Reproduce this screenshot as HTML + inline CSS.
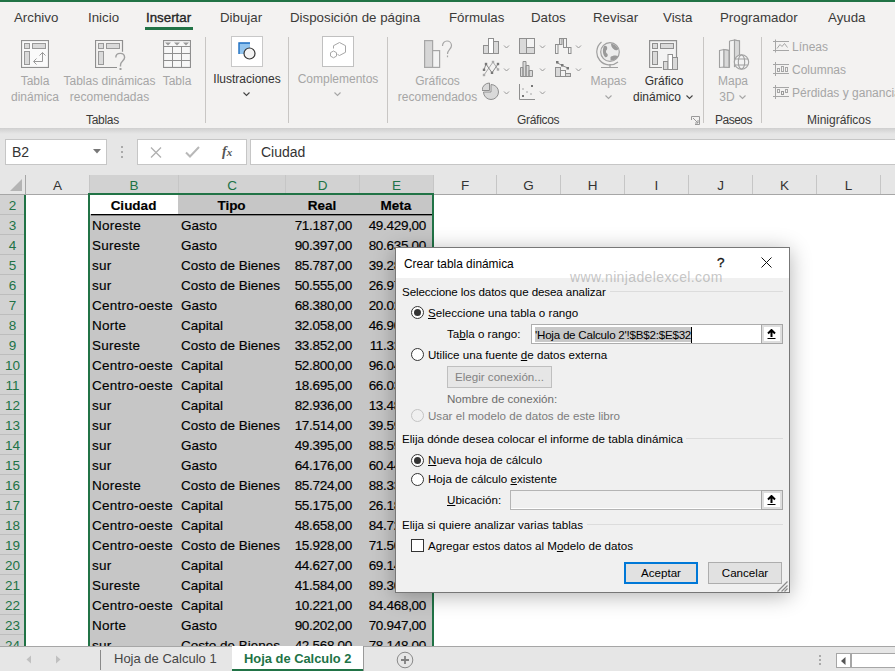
<!DOCTYPE html>
<html><head><meta charset="utf-8">
<style>
*{box-sizing:border-box;margin:0;padding:0}
html,body{width:895px;height:671px;overflow:hidden;background:#fff;font-family:"Liberation Sans",sans-serif;position:relative}
.a{position:absolute;white-space:nowrap}
.tab{position:absolute;top:10px;font-size:13.3px;color:#3b3a39;line-height:16px;white-space:nowrap}
.rl{position:absolute;font-size:12px;line-height:15px;white-space:nowrap;color:#a6a6a6;text-align:center}
.dk{color:#323130}
.gl{position:absolute;top:113px;font-size:12px;line-height:15px;color:#3b3a39;white-space:nowrap}
.sep{position:absolute;top:37px;width:1px;height:86px;background:#c8c6c4}
.ch{position:absolute;top:175px;height:19px;background:#e6e6e6;font-size:13.5px;line-height:22px;text-align:center;color:#333;border-right:1px solid #c6c6c6}
.ch.sel{background:#d2d2d2;color:#217346}
.rh{position:absolute;left:0;width:24px;padding-left:1px;height:20px;background:#d2d2d2;font-size:13.5px;line-height:22px;text-align:center;color:#217346;border-bottom:1px solid #bdbdbd}
.c{position:absolute;height:20px;line-height:21px;font-size:13.5px;color:#000;white-space:nowrap;-webkit-text-stroke:0.15px #000}
.c.b{font-weight:bold}
.c.r{text-align:right}
.dlg{position:absolute;left:395px;top:247px;width:395px;height:346px;background:#f0f0f0;border:1px solid #777;box-shadow:0 3px 20px rgba(0,0,0,.3)}
.dt{position:absolute;font-size:11.6px;line-height:14px;color:#000;white-space:nowrap}
.dis{color:#6d6d6d}
.radio{position:absolute;width:13px;height:13px;border-radius:50%;border:1px solid #333;background:#fff}
.radio.on::after{content:"";position:absolute;left:2px;top:2px;width:7px;height:7px;border-radius:50%;background:#333}
.u{text-decoration:underline}
</style></head><body>
<!-- top green -->
<div class="a" style="left:0;top:0;width:895px;height:2px;background:#217346"></div>
<div class="a" style="left:0;top:2px;width:895px;height:126px;background:#f3f2f1"></div>
<!-- tabs -->
<div class="tab" style="left:14px">Archivo</div>
<div class="tab" style="left:88px">Inicio</div>
<div class="tab" style="left:146px;color:#262626;-webkit-text-stroke:0.35px #262626">Insertar</div>
<div class="a" style="left:145px;top:27px;width:48px;height:3px;background:#217346"></div>
<div class="tab" style="left:220px">Dibujar</div>
<div class="tab" style="left:290px">Disposición de página</div>
<div class="tab" style="left:449px">Fórmulas</div>
<div class="tab" style="left:531px">Datos</div>
<div class="tab" style="left:593px">Revisar</div>
<div class="tab" style="left:663px">Vista</div>
<div class="tab" style="left:720px">Programador</div>
<div class="tab" style="left:828px">Ayuda</div>

<!-- ribbon separators -->
<div class="sep" style="left:205px"></div>
<div class="sep" style="left:288px"></div>
<div class="sep" style="left:387px"></div>
<div class="sep" style="left:703px"></div>
<div class="sep" style="left:761px"></div>

<!-- Tablas -->
<svg class="a" style="left:21px;top:40px" width="28" height="28" viewBox="0 0 28 28" fill="none" stroke="#999" stroke-width="1">
<rect x="0.5" y="0.5" width="27" height="27" fill="#fafafa" stroke="#8f8f8f" stroke-width="1.2"/>
<rect x="3.5" y="3.5" width="5" height="5" fill="#dadada"/><rect x="11.5" y="3.5" width="13" height="5" fill="#dadada"/><rect x="3.5" y="11.5" width="5" height="13" fill="#dadada"/>
<path d="M21.5 12.5V21.5H13M18.5 15.5L21.5 12.5L24.5 15.5M15.5 18.5L12.5 21.5L15.5 24.5"/>
</svg>
<div class="rl" style="left:0px;top:74px;width:70px">Tabla</div>
<div class="rl" style="left:0px;top:90px;width:70px">dinámica</div>

<svg class="a" style="left:95px;top:40px" width="32" height="32" viewBox="0 0 32 32" fill="none" stroke="#999" stroke-width="1">
<path d="M27.5 11.8V0.5H0.5V27.5H22" stroke="#8f8f8f" stroke-width="1.2"/>
<rect x="3.5" y="3.5" width="5" height="5" fill="#dadada"/><rect x="11.5" y="3.5" width="13" height="5" fill="#dadada"/><rect x="3.5" y="11.5" width="5" height="13" fill="#dadada"/>
<path d="M20.8 17.5C20.8 14.5 22.8 13.4 25.2 13.4C27.8 13.4 29.6 15.2 29.6 17.5C29.6 20.6 25.5 21.5 25.5 25V26.6" stroke="#a0a0a0" stroke-width="1.4"/>
<rect x="24.5" y="28" width="2" height="2" fill="#a0a0a0" stroke="none"/>
</svg>
<div class="rl" style="left:62px;top:74px;width:95px">Tablas dinámicas</div>
<div class="rl" style="left:62px;top:90px;width:95px">recomendadas</div>

<svg class="a" style="left:163px;top:40px" width="28" height="28" viewBox="0 0 28 28" fill="none" stroke="#8f8f8f" stroke-width="1">
<rect x="0.5" y="0.5" width="27" height="27" fill="#f7f7f7" stroke-width="1.2"/>
<path d="M0.5 6.5H27.5M0.5 13.5H27.5M0.5 20.5H27.5M9.5 6.5V27.5M18.5 6.5V27.5"/>
<path d="M2 2.5H8L5 5.5ZM11 2.5H17L14 5.5ZM20 2.5H26L23 5.5Z" fill="#9a9a9a" stroke="none"/>
</svg>
<div class="rl" style="left:157px;top:74px;width:40px">Tabla</div>

<!-- Ilustraciones -->
<div class="a" style="left:231px;top:36px;width:32px;height:31px;background:#fff;border:1px solid #c8c8c8"></div>
<svg class="a" style="left:238px;top:42px" width="20" height="20" viewBox="0 0 20 20">
<rect x="1" y="1" width="11" height="11" fill="#92c4ee"/>
<path d="M1 12V1H12" fill="none" stroke="#1c6ec1" stroke-width="1.4"/>
<circle cx="11.5" cy="11.5" r="5.5" fill="#f3f3f3" stroke="#333" stroke-width="1.2"/>
</svg>
<div class="rl dk" style="left:207px;top:72px;width:80px">Ilustraciones</div>
<svg class="a" style="left:243px;top:92px" width="7" height="5" viewBox="0 0 7 5"><path d="M0.5 0.5L3.5 3.5L6.5 0.5" fill="none" stroke="#444" stroke-width="1.1"/></svg>

<!-- Complementos -->
<div class="a" style="left:322px;top:36px;width:32px;height:31px;background:#fff;border:1px solid #c0c0c0"></div>
<svg class="a" style="left:328px;top:42px" width="20" height="20" viewBox="0 0 20 20" fill="none" stroke="#a6a6a6" stroke-width="1">
<path d="M5.5 6.5V3.7L11.5 0.5L17.5 3.7V10.3L11.5 13.5L9.5 12.4"/>
<path d="M5.5 9L8.5 10.7V14.1L5.5 15.8L2.5 14.1V10.7Z"/>
</svg>
<div class="rl" style="left:292px;top:72px;width:92px">Complementos</div>
<svg class="a" style="left:334px;top:92px" width="7" height="5" viewBox="0 0 7 5"><path d="M0.5 0.5L3.5 3.5L6.5 0.5" fill="none" stroke="#a6a6a6" stroke-width="1.1"/></svg>

<!-- Gráficos recomendados -->
<svg class="a" style="left:424px;top:40px" width="30" height="28" viewBox="0 0 30 28" fill="none" stroke="#a6a6a6" stroke-width="1.2">
<rect x="0.6" y="0.6" width="8" height="26.8" fill="#d6d6d6"/>
<rect x="8.6" y="10.6" width="7" height="16.8" fill="#f3f3f3"/>
<path d="M18.5 6C18.5 3 20.5 1 23 1C25.5 1 27.5 3 27.5 5.5C27.5 9 23.5 10 23.5 14M23.5 15.5V17.2"/>
</svg>
<div class="rl" style="left:400px;top:74px;width:75px">Gráficos</div>
<div class="rl" style="left:395px;top:90px;width:85px">recomendados</div>

<!-- small charts -->
<svg class="a" style="left:482px;top:37px" width="100" height="64" viewBox="0 0 100 64" fill="none" stroke="#8f8f8f" stroke-width="1">
<!-- col chart -->
<rect x="1.5" y="8.5" width="5" height="8" fill="#d9d9d9"/><rect x="6.5" y="1.5" width="5" height="15" fill="#fff"/><rect x="11.5" y="4.5" width="5" height="12" fill="#d9d9d9"/>
<!-- treemap -->
<rect x="37.5" y="1.5" width="15" height="15" fill="#f3f3f3"/><rect x="37.5" y="1.5" width="7" height="15" fill="#d9d9d9"/><rect x="44.5" y="10.5" width="8" height="6" fill="#d9d9d9"/>
<!-- waterfall -->
<rect x="73.5" y="7.5" width="2.5" height="9" fill="#f3f3f3"/><rect x="77.5" y="1.5" width="2.5" height="6" fill="#d9d9d9"/><rect x="81.5" y="1.5" width="3" height="9" fill="#f3f3f3"/><rect x="86.5" y="10.5" width="2.5" height="6" fill="#f3f3f3"/>
<path d="M76 7.5H77.5M80 1.5H81.5M84.5 10.5H86.5"/>
<!-- line chart -->
<g transform="translate(0,23)">
<path d="M2 15L11 2L16 9.5" stroke="#aaa" stroke-width="1"/>
<path d="M2 9.8L4 4L10 12.8L16 4" stroke="#888" stroke-width="1"/>
<rect x="0.8" y="8.6" width="2.4" height="2.4" fill="#777" stroke="none"/><rect x="2.8" y="2.8" width="2.4" height="2.4" fill="#777" stroke="none"/><rect x="8.8" y="11.6" width="2.4" height="2.4" fill="#777" stroke="none"/><rect x="14.8" y="2.8" width="2.4" height="2.4" fill="#777" stroke="none"/>
<rect x="0.8" y="13.8" width="2.4" height="2.4" fill="#aaa" stroke="none"/><rect x="9.8" y="0.8" width="2.4" height="2.4" fill="#aaa" stroke="none"/><rect x="14.8" y="8.3" width="2.4" height="2.4" fill="#aaa" stroke="none"/>
</g>
<!-- histogram -->
<path d="M38.5 39.5V30.5H41V39.5M41 39.5V24.5H44V39.5M44 39.5V28.5H47V39.5M47 39.5V33.5H50.5V39.5H38.5" fill="#d9d9d9"/>
<!-- pareto -->
<rect x="73.5" y="30.5" width="5" height="9" fill="#d9d9d9"/><rect x="78.5" y="33.5" width="5" height="6" fill="#f3f3f3"/><rect x="83.5" y="36.5" width="5" height="3" fill="#d9d9d9"/>
<path d="M75 25.5L80 28.5L86 31"/><rect x="74" y="24" width="2.5" height="2.5" fill="#777" stroke="none"/><rect x="79" y="27" width="2.5" height="2.5" fill="#777" stroke="none"/><rect x="84.5" y="30" width="2.5" height="2.5" fill="#777" stroke="none"/>
<!-- pie -->
<path d="M9 47.5A7.5 7.5 0 1 1 1.5 55H9Z" fill="#d9d9d9"/><path d="M7.5 46V53.5H0A7.5 7.5 0 0 1 7.5 46Z" fill="#d9d9d9"/>
<!-- scatter -->
<path d="M37.5 47V62.5H53"/>
<rect x="40" y="58" width="2" height="2" fill="#777" stroke="none"/><rect x="40" y="51" width="2" height="2" fill="#ccc" stroke="none"/><rect x="44" y="54" width="2" height="2" fill="#ccc" stroke="none"/><rect x="48" y="56" width="2" height="2" fill="#ccc" stroke="none"/><rect x="49" y="48" width="2" height="2" fill="#777" stroke="none"/>
<!-- chevrons -->
<path d="M22 8.5L24.5 11L27 8.5M58 8.5L60.5 11L63 8.5M94 8.5L96.5 11L99 8.5M22 31.5L24.5 34L27 31.5M58 31.5L60.5 34L63 31.5M94 31.5L96.5 34L99 31.5M22 54.5L24.5 57L27 54.5M58 54.5L60.5 57L63 54.5" stroke="#999"/>
</svg>

<!-- Mapas -->
<svg class="a" style="left:596px;top:38px" width="26" height="32" viewBox="0 0 26 32" fill="none" stroke="#a0a0a0" stroke-width="1.2">
<circle cx="14" cy="14" r="9.3" fill="#ececec"/>
<path d="M8 8C10 7 12 9 11 11.5C9.5 12.5 9.5 15 11.5 16C12.5 18 10.5 20 9 19C7 17 6 12 8 8ZM15 5.5C18 6 21 8 22.5 11C21 13 19 12.5 17.5 11C16 10 15 8 15 5.5ZM14.5 19C17 17 20.5 17 22 18.5C20.5 21 17 23 14.5 22.5Z" fill="#9a9a9a" stroke="none"/>
<path d="M5.5 4A12 12 0 0 0 22 24M14 26V29.5M5 29.5H22"/>
</svg>
<div class="rl" style="left:586px;top:74px;width:45px">Mapas</div>
<svg class="a" style="left:605px;top:95px" width="7" height="5" viewBox="0 0 7 5"><path d="M0.5 0.5L3.5 3.5L6.5 0.5" fill="none" stroke="#a6a6a6" stroke-width="1.1"/></svg>

<!-- Gráfico dinámico -->
<svg class="a" style="left:649px;top:40px" width="31" height="31" viewBox="0 0 31 31" fill="none" stroke="#8f8f8f" stroke-width="1.2">
<path d="M13 27.5H0.6V0.6H27.5V17" fill="#f3f3f3"/>
<rect x="3.5" y="3.5" width="5" height="5" fill="#dadada" stroke-width="1"/><rect x="11.5" y="3.5" width="13" height="5" fill="#dadada" stroke-width="1"/><rect x="3.5" y="11.5" width="5" height="13" fill="#dadada" stroke-width="1"/>
<rect x="14.5" y="21.5" width="4.5" height="8" fill="#d9d9d9" stroke-width="1"/><rect x="19" y="14.5" width="4.5" height="15" fill="#fff" stroke-width="1"/><rect x="23.5" y="17.5" width="5" height="12" fill="#d9d9d9" stroke-width="1"/>
</svg>
<div class="rl dk" style="left:630px;top:74px;width:68px">Gráfico</div>
<div class="rl dk" style="left:623px;top:90px;width:68px">dinámico</div>
<svg class="a" style="left:686px;top:95px" width="7" height="5" viewBox="0 0 7 5"><path d="M0.5 0.5L3.5 3.5L6.5 0.5" fill="none" stroke="#444" stroke-width="1.1"/></svg>
<svg class="a" style="left:691px;top:116px" width="9" height="9" viewBox="0 0 9 9" fill="none" stroke="#999" stroke-width="1"><path d="M0.5 4V0.5H8.5V8.5H4M2 2L7 7M7 4V7H4"/></svg>

<!-- Mapa 3D -->
<svg class="a" style="left:718px;top:39px" width="33" height="32" viewBox="0 0 33 32" fill="none" stroke="#a0a0a0" stroke-width="1.1">
<path d="M1.5 11.5L6 10.5L11 11.5V28.5L6 28L1.5 28.5Z" fill="#f3f3f3"/><path d="M6 10.5V28" /><path d="M6 10.5L11 11.5V28.5L6 28Z" fill="#d9d9d9"/>
<path d="M11.5 2L16.5 1L21.5 2V20M11.5 2V28.5" fill="#f3f3f3"/><path d="M16.5 1V28" /><path d="M16.5 1L21.5 2V18L16.5 28Z" fill="#d9d9d9"/>
<circle cx="23.5" cy="23" r="7.2" fill="#f3f3f3"/>
<path d="M17 20H30M17 26H30"/><ellipse cx="23.5" cy="23" rx="3.2" ry="7"/>
</svg>
<div class="rl" style="left:713px;top:74px;width:40px">Mapa</div>
<div class="rl" style="left:713px;top:90px;width:28px">3D</div>
<svg class="a" style="left:739px;top:95px" width="7" height="5" viewBox="0 0 7 5"><path d="M0.5 0.5L3.5 3.5L6.5 0.5" fill="none" stroke="#a6a6a6" stroke-width="1.1"/></svg>

<!-- Minigráficos -->
<svg class="a" style="left:772px;top:39px" width="18" height="62" viewBox="0 0 18 62" fill="none" stroke="#a6a6a6" stroke-width="1">
<path d="M3.5 0.5V13.5M1 2.5H17M1 11.5H17M5 9.5L8 5.5L10 7.5L12.5 4.5L15.5 8.5"/>
<path d="M3.5 23V37M1 25.5H17M1 34.5H17"/><rect x="5.5" y="29.5" width="2" height="3"/><rect x="9.5" y="27.5" width="2" height="5"/><rect x="13.5" y="28.5" width="2" height="4"/>
<path d="M3.5 46V60M1 48.5H17M1 57.5H17"/><rect x="5.5" y="50.5" width="2" height="3"/><rect x="9.5" y="52.5" width="2" height="3" stroke="#999"/><rect x="13.5" y="50.5" width="2" height="3"/>
</svg>
<div class="a" style="left:792px;top:40px;font-size:12px;line-height:15px;color:#a6a6a6">Líneas</div>
<div class="a" style="left:792px;top:63px;font-size:12px;line-height:15px;color:#a6a6a6">Columnas</div>
<div class="a" style="left:792px;top:86px;font-size:12px;line-height:15px;color:#a6a6a6">Pérdidas y ganancias</div>


<!-- group labels -->
<div class="gl" style="left:86px;letter-spacing:-0.3px">Tablas</div>
<div class="gl" style="left:517px;letter-spacing:-0.3px">Gráficos</div>
<div class="gl" style="left:715px;letter-spacing:-0.5px">Paseos</div>
<div class="gl" style="left:807px">Minigráficos</div>

<!-- ribbon shadow -->
<div class="a" style="left:0;top:128px;width:895px;height:47px;background:#e6e6e6"></div>
<div class="a" style="left:0;top:128px;width:895px;height:6px;background:linear-gradient(#cfcfcf,#e6e6e6)"></div>

<!-- formula bar -->
<div class="a" style="left:5px;top:139px;width:102px;height:26px;background:#fff;border:1px solid #c6c6c6"></div>
<div class="a" style="left:12px;top:144px;font-size:14px;line-height:17px;color:#333">B2</div>
<svg class="a" style="left:93px;top:149px" width="8" height="5" viewBox="0 0 8 5"><path d="M0 0H8L4 4.5Z" fill="#777"/></svg>
<div class="a" style="left:121px;top:146px;width:2px;height:2px;background:#aaa"></div><div class="a" style="left:121px;top:151px;width:2px;height:2px;background:#aaa"></div><div class="a" style="left:121px;top:156px;width:2px;height:2px;background:#aaa"></div>
<!--FBAR-->
<div class="a" style="left:137px;top:139px;width:110px;height:26px;background:#fff;border:1px solid #c6c6c6"></div>
<div class="a" style="left:250px;top:139px;width:650px;height:26px;background:#fff;border:1px solid #c6c6c6"></div>
<div class="a" style="left:261px;top:144px;font-size:14px;line-height:17px;color:#333">Ciudad</div>
<svg class="a" style="left:150px;top:147px" width="12" height="11" viewBox="0 0 12 11"><path d="M1 0.5L11 10.5M11 0.5L1 10.5" stroke="#b0b0b0" stroke-width="1.3"/></svg>
<svg class="a" style="left:185px;top:146px" width="15" height="12" viewBox="0 0 15 12"><path d="M1 6.5L5 10.5L14 1" fill="none" stroke="#b8b8b8" stroke-width="2"/></svg>
<div class="a" style="left:222px;top:143px;font-family:'Liberation Serif',serif;font-style:italic;font-size:14px;line-height:17px;color:#555;font-weight:bold">f<span style="font-size:11px">x</span></div>

<!-- grid -->
<div class="a" style="left:0;top:175px;width:26px;height:20px;background:#e6e6e6;border-right:1px solid #a6a6a6"></div>
<svg class="a" style="left:10px;top:179px" width="13" height="12" viewBox="0 0 13 12"><path d="M12 0V12H0Z" fill="#b4b4b4"/></svg>
<div class="a" style="left:0;top:194px;width:895px;height:1px;background:#a6a6a6"></div>
<div class="ch" style="left:26px;width:64px">A</div>
<div class="ch sel" style="left:90px;width:89px">B</div>
<div class="ch sel" style="left:179px;width:107px">C</div>
<div class="ch sel" style="left:286px;width:74px">D</div>
<div class="ch sel" style="left:360px;width:74px">E</div>
<div class="ch" style="left:434px;width:63px">F</div>
<div class="ch" style="left:497px;width:64px">G</div>
<div class="ch" style="left:561px;width:64px">H</div>
<div class="ch" style="left:625px;width:64px">I</div>
<div class="ch" style="left:689px;width:64px">J</div>
<div class="ch" style="left:753px;width:64px">K</div>
<div class="ch" style="left:817px;width:64px">L</div>
<div class="ch" style="left:881px;width:64px">M</div>
<div class="rh" style="top:195px">2</div>
<div class="rh" style="top:215px">3</div>
<div class="rh" style="top:235px">4</div>
<div class="rh" style="top:255px">5</div>
<div class="rh" style="top:275px">6</div>
<div class="rh" style="top:295px">7</div>
<div class="rh" style="top:315px">8</div>
<div class="rh" style="top:335px">9</div>
<div class="rh" style="top:355px">10</div>
<div class="rh" style="top:375px">11</div>
<div class="rh" style="top:395px">12</div>
<div class="rh" style="top:415px">13</div>
<div class="rh" style="top:435px">14</div>
<div class="rh" style="top:455px">15</div>
<div class="rh" style="top:475px">16</div>
<div class="rh" style="top:495px">17</div>
<div class="rh" style="top:515px">18</div>
<div class="rh" style="top:535px">19</div>
<div class="rh" style="top:555px">20</div>
<div class="rh" style="top:575px">21</div>
<div class="rh" style="top:595px">22</div>
<div class="rh" style="top:615px">23</div>
<div class="rh" style="top:635px">24</div>
<div style="position:absolute;left:90px;top:195px;width:342px;height:460px;background:#c6c6c6"></div>
<div style="position:absolute;left:90px;top:195px;width:88px;height:19px;background:#fff"></div>
<div style="position:absolute;left:91px;top:214px;width:341px;height:1px;background:#000"></div><div style="position:absolute;left:91px;top:215px;width:341px;height:1px;background:rgba(0,0,0,.35)"></div>
<div class="c b" style="top:195px;left:89px;width:89px;text-align:center">Ciudad</div>
<div class="c b" style="top:195px;left:178px;width:107px;text-align:center">Tipo</div>
<div class="c b" style="top:195px;left:285px;width:74px;text-align:center">Real</div>
<div class="c b" style="top:195px;left:359px;width:74px;text-align:center">Meta</div>
<div class="c" style="top:215px;left:92px;letter-spacing:0.25px">Noreste</div>
<div class="c" style="top:215px;left:181px">Gasto</div>
<div class="c r" style="top:215px;left:285px;width:67px;letter-spacing:-0.3px">71.187,00</div>
<div class="c r" style="top:215px;left:359px;width:67px;letter-spacing:-0.3px">49.429,00</div>
<div class="c" style="top:235px;left:92px;letter-spacing:0.25px">Sureste</div>
<div class="c" style="top:235px;left:181px">Gasto</div>
<div class="c r" style="top:235px;left:285px;width:67px;letter-spacing:-0.3px">90.397,00</div>
<div class="c r" style="top:235px;left:359px;width:67px;letter-spacing:-0.3px">80.635,00</div>
<div class="c" style="top:255px;left:92px;letter-spacing:0.25px">sur</div>
<div class="c" style="top:255px;left:181px">Costo de Bienes</div>
<div class="c r" style="top:255px;left:285px;width:67px;letter-spacing:-0.3px">85.787,00</div>
<div class="c r" style="top:255px;left:359px;width:67px;letter-spacing:-0.3px">39.281,00</div>
<div class="c" style="top:275px;left:92px;letter-spacing:0.25px">sur</div>
<div class="c" style="top:275px;left:181px">Costo de Bienes</div>
<div class="c r" style="top:275px;left:285px;width:67px;letter-spacing:-0.3px">50.555,00</div>
<div class="c r" style="top:275px;left:359px;width:67px;letter-spacing:-0.3px">26.971,00</div>
<div class="c" style="top:295px;left:92px;letter-spacing:0.25px">Centro-oeste</div>
<div class="c" style="top:295px;left:181px">Gasto</div>
<div class="c r" style="top:295px;left:285px;width:67px;letter-spacing:-0.3px">68.380,00</div>
<div class="c r" style="top:295px;left:359px;width:67px;letter-spacing:-0.3px">20.021,00</div>
<div class="c" style="top:315px;left:92px;letter-spacing:0.25px">Norte</div>
<div class="c" style="top:315px;left:181px">Capital</div>
<div class="c r" style="top:315px;left:285px;width:67px;letter-spacing:-0.3px">32.058,00</div>
<div class="c r" style="top:315px;left:359px;width:67px;letter-spacing:-0.3px">46.901,00</div>
<div class="c" style="top:335px;left:92px;letter-spacing:0.25px">Sureste</div>
<div class="c" style="top:335px;left:181px">Costo de Bienes</div>
<div class="c r" style="top:335px;left:285px;width:67px;letter-spacing:-0.3px">33.852,00</div>
<div class="c r" style="top:335px;left:359px;width:67px;letter-spacing:-0.3px">11.321,00</div>
<div class="c" style="top:355px;left:92px;letter-spacing:0.25px">Centro-oeste</div>
<div class="c" style="top:355px;left:181px">Capital</div>
<div class="c r" style="top:355px;left:285px;width:67px;letter-spacing:-0.3px">52.800,00</div>
<div class="c r" style="top:355px;left:359px;width:67px;letter-spacing:-0.3px">96.041,00</div>
<div class="c" style="top:375px;left:92px;letter-spacing:0.25px">Centro-oeste</div>
<div class="c" style="top:375px;left:181px">Capital</div>
<div class="c r" style="top:375px;left:285px;width:67px;letter-spacing:-0.3px">18.695,00</div>
<div class="c r" style="top:375px;left:359px;width:67px;letter-spacing:-0.3px">66.031,00</div>
<div class="c" style="top:395px;left:92px;letter-spacing:0.25px">sur</div>
<div class="c" style="top:395px;left:181px">Capital</div>
<div class="c r" style="top:395px;left:285px;width:67px;letter-spacing:-0.3px">82.936,00</div>
<div class="c r" style="top:395px;left:359px;width:67px;letter-spacing:-0.3px">13.481,00</div>
<div class="c" style="top:415px;left:92px;letter-spacing:0.25px">sur</div>
<div class="c" style="top:415px;left:181px">Costo de Bienes</div>
<div class="c r" style="top:415px;left:285px;width:67px;letter-spacing:-0.3px">17.514,00</div>
<div class="c r" style="top:415px;left:359px;width:67px;letter-spacing:-0.3px">39.591,00</div>
<div class="c" style="top:435px;left:92px;letter-spacing:0.25px">sur</div>
<div class="c" style="top:435px;left:181px">Gasto</div>
<div class="c r" style="top:435px;left:285px;width:67px;letter-spacing:-0.3px">49.395,00</div>
<div class="c r" style="top:435px;left:359px;width:67px;letter-spacing:-0.3px">88.591,00</div>
<div class="c" style="top:455px;left:92px;letter-spacing:0.25px">sur</div>
<div class="c" style="top:455px;left:181px">Gasto</div>
<div class="c r" style="top:455px;left:285px;width:67px;letter-spacing:-0.3px">64.176,00</div>
<div class="c r" style="top:455px;left:359px;width:67px;letter-spacing:-0.3px">60.441,00</div>
<div class="c" style="top:475px;left:92px;letter-spacing:0.25px">Noreste</div>
<div class="c" style="top:475px;left:181px">Costo de Bienes</div>
<div class="c r" style="top:475px;left:285px;width:67px;letter-spacing:-0.3px">85.724,00</div>
<div class="c r" style="top:475px;left:359px;width:67px;letter-spacing:-0.3px">88.331,00</div>
<div class="c" style="top:495px;left:92px;letter-spacing:0.25px">Centro-oeste</div>
<div class="c" style="top:495px;left:181px">Capital</div>
<div class="c r" style="top:495px;left:285px;width:67px;letter-spacing:-0.3px">55.175,00</div>
<div class="c r" style="top:495px;left:359px;width:67px;letter-spacing:-0.3px">26.181,00</div>
<div class="c" style="top:515px;left:92px;letter-spacing:0.25px">Centro-oeste</div>
<div class="c" style="top:515px;left:181px">Capital</div>
<div class="c r" style="top:515px;left:285px;width:67px;letter-spacing:-0.3px">48.658,00</div>
<div class="c r" style="top:515px;left:359px;width:67px;letter-spacing:-0.3px">84.721,00</div>
<div class="c" style="top:535px;left:92px;letter-spacing:0.25px">Centro-oeste</div>
<div class="c" style="top:535px;left:181px">Costo de Bienes</div>
<div class="c r" style="top:535px;left:285px;width:67px;letter-spacing:-0.3px">15.928,00</div>
<div class="c r" style="top:535px;left:359px;width:67px;letter-spacing:-0.3px">71.501,00</div>
<div class="c" style="top:555px;left:92px;letter-spacing:0.25px">sur</div>
<div class="c" style="top:555px;left:181px">Capital</div>
<div class="c r" style="top:555px;left:285px;width:67px;letter-spacing:-0.3px">44.627,00</div>
<div class="c r" style="top:555px;left:359px;width:67px;letter-spacing:-0.3px">69.141,00</div>
<div class="c" style="top:575px;left:92px;letter-spacing:0.25px">Sureste</div>
<div class="c" style="top:575px;left:181px">Capital</div>
<div class="c r" style="top:575px;left:285px;width:67px;letter-spacing:-0.3px">41.584,00</div>
<div class="c r" style="top:575px;left:359px;width:67px;letter-spacing:-0.3px">89.301,00</div>
<div class="c" style="top:595px;left:92px;letter-spacing:0.25px">Centro-oeste</div>
<div class="c" style="top:595px;left:181px">Capital</div>
<div class="c r" style="top:595px;left:285px;width:67px;letter-spacing:-0.3px">10.221,00</div>
<div class="c r" style="top:595px;left:359px;width:67px;letter-spacing:-0.3px">84.468,00</div>
<div class="c" style="top:615px;left:92px;letter-spacing:0.25px">Norte</div>
<div class="c" style="top:615px;left:181px">Gasto</div>
<div class="c r" style="top:615px;left:285px;width:67px;letter-spacing:-0.3px">90.202,00</div>
<div class="c r" style="top:615px;left:359px;width:67px;letter-spacing:-0.3px">70.947,00</div>
<div class="c" style="top:635px;left:92px;letter-spacing:0.25px">sur</div>
<div class="c" style="top:635px;left:181px">Costo de Bienes</div>
<div class="c r" style="top:635px;left:285px;width:67px;letter-spacing:-0.3px">42.568,00</div>
<div class="c r" style="top:635px;left:359px;width:67px;letter-spacing:-0.3px">78.148,00</div>
<div style="position:absolute;left:88px;top:193px;width:346px;height:470px;border:2px solid #217346"></div>
<div style="position:absolute;left:24px;top:195px;width:2px;height:460px;background:#217346"></div>

<!-- sheet tabs -->
<div class="a" style="left:0;top:646px;width:895px;height:25px;background:#e6e6e6;border-top:1px solid #a6a6a6"></div>
<svg class="a" style="left:26px;top:655px" width="36" height="9" viewBox="0 0 36 9"><path d="M5 0.5V8.5L0.5 4.5Z M30 0.5V8.5L34.5 4.5Z" fill="#c0c0c0"/></svg>
<div class="a" style="left:100px;top:650px;width:1px;height:20px;background:#8a8a8a"></div>
<div class="a" style="left:114px;top:651px;font-size:13px;line-height:16px;color:#444">Hoja de Calculo 1</div>
<div class="a" style="left:232px;top:646px;width:132px;height:25px;background:#fff;border-right:1px solid #9a9a9a"></div>
<div class="a" style="left:232px;top:669px;width:131px;height:2px;background:#217346"></div>
<div class="a" style="left:244px;top:651px;font-size:12.9px;line-height:16px;color:#217346;font-weight:bold">Hoja de Calculo 2</div>
<svg class="a" style="left:396px;top:651px" width="18" height="18" viewBox="0 0 18 18"><circle cx="9" cy="9" r="7.8" fill="none" stroke="#8a8a8a" stroke-width="1"/><path d="M9 5V13M5 9H13" stroke="#808080" stroke-width="1.8"/></svg>
<div class="a" style="left:819px;top:655px;width:2px;height:2px;background:#aaa"></div><div class="a" style="left:819px;top:659px;width:2px;height:2px;background:#aaa"></div><div class="a" style="left:819px;top:663px;width:2px;height:2px;background:#aaa"></div>
<div class="a" style="left:836px;top:653px;width:70px;height:15px;background:#fff;border:1px solid #a6a6a6"></div>
<div class="a" style="left:850px;top:653px;width:2px;height:15px;background:#a6a6a6"></div>
<svg class="a" style="left:841px;top:657px" width="5" height="8" viewBox="0 0 5 8"><path d="M4.5 0V8L0 4Z" fill="#555"/></svg>

<!-- dialog -->
<div class="dlg">
<div class="a" style="left:0;top:0;width:393px;height:30px;background:#fff"></div>
<div class="dt" style="left:8px;top:9px;font-size:11.9px">Crear tabla dinámica</div>
<div class="dt" style="left:321px;top:8px;font-size:13.5px;color:#111;-webkit-text-stroke:0.3px #111">?</div>
<svg class="a" style="left:365px;top:9px" width="11" height="11" viewBox="0 0 11 11"><path d="M0.5 0.5L10.5 10.5M10.5 0.5L0.5 10.5" stroke="#111" stroke-width="1"/></svg>
<div class="a" style="left:174px;top:21px;font-size:14px;line-height:16px;letter-spacing:0.38px;color:rgba(150,150,150,.55)">www.ninjadelexcel.com</div>

<div class="dt" style="left:6px;top:37px;letter-spacing:-0.1px">Seleccione los datos que desea analizar</div>
<div class="a" style="left:214px;top:43px;width:173px;height:1px;background:#dcdcdc"></div>
<div class="radio on" style="left:15px;top:58px"></div>
<div class="dt" style="left:32px;top:58px"><span class="u">S</span>eleccione una tabla o rango</div>
<div class="dt" style="left:51px;top:79px">Ta<span class="u">b</span>la o rango:</div>
<div class="a" style="left:135px;top:76px;width:252px;height:20px;background:#fff;border:1px solid #adadad"></div>
<div class="a" style="left:139px;top:79px;width:157px;height:15px;background:#c8c8c8"></div>
<div class="dt" style="left:139px;top:80px;letter-spacing:-0.23px">'Hoja de Calculo 2'!$B$2:$E$32</div>
<div class="a" style="left:295px;top:79px;width:1px;height:16px;background:#000"></div>
<div class="a" style="left:365px;top:76px;width:22px;height:20px;background:#fff;border:1px solid #a6a6a6;box-shadow:inset 0 0 0 2px #dedede"></div>
<svg class="a" style="left:371px;top:81px" width="9" height="10" viewBox="0 0 9 10"><path d="M1 4.5L4.5 1L8 4.5M4.5 1.5V8" fill="none" stroke="#000" stroke-width="2"/><rect x="0.5" y="9" width="8" height="1.2" fill="#000"/></svg>

<div class="radio" style="left:15px;top:100px"></div>
<div class="dt" style="left:32px;top:100px">Utilice una fuente <span class="u">d</span>e datos externa</div>
<div class="a" style="left:51px;top:118px;width:105px;height:22px;background:#e6e6e6;border:1px solid #bfbfbf"></div>
<div class="dt dis" style="left:59px;top:122px;color:#838383">Elegir conexión...</div>
<div class="dt dis" style="left:51px;top:144px">Nombre de conexión:</div>
<div class="radio" style="left:15px;top:161px;border-color:#c4c4c4;background:#f0f0f0"></div>
<div class="dt" style="left:32px;top:161px;color:#7d7d7d">Usar el modelo de datos de este libro</div>

<div class="dt" style="left:6px;top:184px">Elija dónde desea colocar el informe de tabla dinámica</div>
<div class="a" style="left:290px;top:190px;width:97px;height:1px;background:#dcdcdc"></div>
<div class="radio on" style="left:15px;top:206px"></div>
<div class="dt" style="left:32px;top:205px"><span class="u">N</span>ueva hoja de cálculo</div>
<div class="radio" style="left:15px;top:225px"></div>
<div class="dt" style="left:32px;top:224px">Hoja de cálculo <span class="u">e</span>xistente</div>
<div class="dt" style="left:51px;top:245px"><span class="u">U</span>bicación:</div>
<div class="a" style="left:114px;top:242px;width:273px;height:20px;background:#f0f0f0;border:1px solid #b4b4b4;box-shadow:inset -1px -1px 0 #fff"></div>
<div class="a" style="left:365px;top:242px;width:22px;height:20px;background:#fff;border:1px solid #a6a6a6;box-shadow:inset 0 0 0 2px #dedede"></div>
<svg class="a" style="left:371px;top:247px" width="9" height="10" viewBox="0 0 9 10"><path d="M1 4.5L4.5 1L8 4.5M4.5 1.5V8" fill="none" stroke="#000" stroke-width="2"/><rect x="0.5" y="9" width="8" height="1.2" fill="#000"/></svg>

<div class="dt" style="left:6px;top:270px">Elija si quiere analizar varias tablas</div>
<div class="a" style="left:191px;top:276px;width:196px;height:1px;background:#dcdcdc"></div>
<div class="a" style="left:15px;top:291px;width:13px;height:13px;border:1px solid #333;background:#fff"></div>
<div class="dt" style="left:32px;top:291px">Agregar estos datos al M<span class="u">o</span>delo de datos</div>

<div class="a" style="left:228px;top:314px;width:74px;height:22px;background:#e1e1e1;border:2px solid #0078d7"></div>
<div class="dt" style="left:228px;top:318px;width:74px;text-align:center">Aceptar</div>
<div class="a" style="left:312px;top:314px;width:74px;height:22px;background:#e1e1e1;border:1px solid #adadad"></div>
<div class="dt" style="left:312px;top:318px;width:74px;text-align:center">Cancelar</div>
<svg class="a" style="left:380px;top:332px" width="12" height="12" viewBox="0 0 12 12"><path d="M11.5 1.5L1.5 11.5M11.5 5.5L5.5 11.5M11.5 8.5L8.5 11.5" stroke="#8a8a8a" stroke-width="1.2"/></svg>

</div>
</body></html>
